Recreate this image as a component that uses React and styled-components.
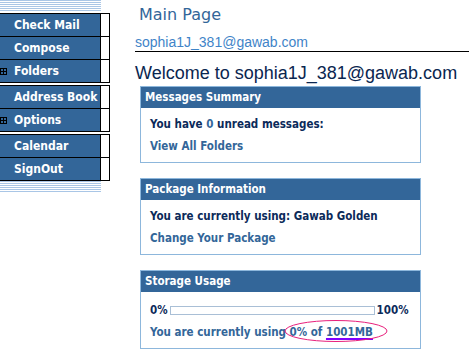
import React from "react";
import styled, { createGlobalStyle } from "styled-components";

const GlobalStyle = createGlobalStyle`
  html, body {
    margin: 0;
    padding: 0;
    background: #fff;
  }
  body {
    font-family: "DejaVu Sans Condensed", "DejaVu Sans", sans-serif;
  }
`;

const menuGroups = [
  [
    { label: "Check Mail" },
    { label: "Compose" },
    { label: "Folders", expand: true },
  ],
  [{ label: "Address Book" }, { label: "Options", expand: true }],
  [{ label: "Calendar" }, { label: "SignOut" }],
];

const PlusBox = () => (
  <svg width="7" height="7" viewBox="0 0 7 7">
    <rect x="0.5" y="0.5" width="6" height="6" fill="none" stroke="#000" />
    <path d="M1 3.5H6M3.5 1V6" stroke="#000" />
  </svg>
);

const App = () => {
  return (
    <Page>
      <GlobalStyle />
      <Sidebar>
        <Stripes />
        {menuGroups.map((group, i) => (
          <Group key={i}>
            {group.map((item) => (
              <MenuRow key={item.label}>
                <MenuCell>
                  <Expander>{item.expand && <PlusBox />}</Expander>
                  {item.label}
                </MenuCell>
              </MenuRow>
            ))}
          </Group>
        ))}
        <Stripes />
      </Sidebar>

      <Main>
        <Title>Main Page</Title>
        <Account href="#">sophia1J_381@gawab.com</Account>
        <Divider />
        <Welcome>Welcome to sophia1J_381@gawab.com</Welcome>

        <Box>
          <BoxHeader>Messages Summary</BoxHeader>
          <BoxBody>
            <Line>
              You have <Count>0</Count> unread messages:
            </Line>
            <Line>
              <Link href="#">View All Folders</Link>
            </Line>
          </BoxBody>
        </Box>

        <Box>
          <BoxHeader>Package Information</BoxHeader>
          <BoxBody>
            <Line>You are currently using: Gawab Golden</Line>
            <Line>
              <Link href="#">Change Your Package</Link>
            </Line>
          </BoxBody>
        </Box>

        <Box>
          <BoxHeader>Storage Usage</BoxHeader>
          <BoxBody $top={7}>
            <Line>
              0%
              <Bar>
                <Fill style={{ width: "0%" }} />
              </Bar>
              100%
            </Line>
            <Line $light>
              You are currently using{" "}
              <Circled>
                0% of <Used href="#">1001MB</Used>
                <Ring width="104" height="24" viewBox="0 0 104 24">
                  <ellipse
                    cx="52"
                    cy="12"
                    rx="51"
                    ry="10.5"
                    fill="none"
                    stroke="#e8207c"
                    strokeWidth="1"
                  />
                </Ring>
              </Circled>
            </Line>
          </BoxBody>
        </Box>
      </Main>
    </Page>
  );
};

export default App;

const Page = styled.div`
  display: flex;
  align-items: flex-start;
  width: 469px;
  height: 363px;
  overflow: hidden;
`;

const Sidebar = styled.div`
  width: 110px;
  flex-shrink: 0;
  display: flex;
  flex-direction: column;
  gap: 2px;
`;

const Stripes = styled.div`
  width: 101px;
  height: 12px;
  background: repeating-linear-gradient(
    to bottom,
    #a9c6e6 0px,
    #a9c6e6 1px,
    #ffffff 1px,
    #ffffff 2px
  );
  margin-bottom: -1px;
  &:last-child {
    margin-top: -2px;
    margin-bottom: 0;
  }
`;

const Group = styled.div`
  border-top: 1px solid #000;
  border-right: 1px solid #000;
  width: 109px;
`;

const MenuRow = styled.div`
  border-bottom: 1px solid #000;
  height: 22px;
`;

const MenuCell = styled.div`
  width: 101px;
  height: 100%;
  box-sizing: border-box;
  border-right: 1px solid #000;
  background: #336699;
  color: #fff;
  font-weight: bold;
  font-size: 12px;
  display: flex;
  align-items: center;
  white-space: nowrap;
  overflow: hidden;
`;

const Expander = styled.span`
  width: 14px;
  flex-shrink: 0;
  display: flex;
  align-items: center;
`;

const Main = styled.div`
  flex: 1;
  margin-left: 25px;
  padding-top: 5px;
  font-family: "Liberation Sans", Arial, sans-serif;
`;

const Title = styled.div`
  font-family: "DejaVu Sans", sans-serif;
  font-size: 16px;
  color: #336699;
  padding-left: 4px;
  line-height: 20px;
`;

const Account = styled.a`
  display: block;
  margin-top: 9px;
  font-size: 14px;
  line-height: 16px;
  color: #3f84c8;
  text-decoration: none;
`;

const Divider = styled.div`
  height: 1px;
  background: #000;
  margin-top: 1px;
`;

const Welcome = styled.div`
  margin-top: 10px;
  font-size: 18px;
  line-height: 22px;
  color: #0a2650;
  white-space: nowrap;
`;

const Box = styled.div`
  width: 279px;
  margin: 2px 0 15px 5px;
  border: 1px solid #8db7dc;
  font-family: "DejaVu Sans Condensed", "DejaVu Sans", sans-serif;
  font-weight: bold;
  font-size: 11.5px;
`;

const BoxHeader = styled.div`
  background: #336699;
  color: #fff;
  height: 21px;
  line-height: 21px;
  padding-left: 4px;
`;

const BoxBody = styled.div`
  padding: ${({ $top }) => $top ?? 5}px 9px 5px 9px;
`;

const Line = styled.div`
  display: flex;
  align-items: center;
  height: 22px;
  white-space: pre;
  color: ${({ $light }) => ($light ? "#336699" : "#0b2a5a")};
`;

const Count = styled.span`
  color: #336699;
`;

const Link = styled.a`
  color: #336699;
  text-decoration: none;
`;

const Bar = styled.div`
  width: 203px;
  height: 7px;
  border: 1px solid #a9bfd6;
  margin: 0 2px 0 2px;
  background: #fff;
`;

const Fill = styled.div`
  height: 100%;
  background: #336699;
`;

const Circled = styled.span`
  position: relative;
`;

const Used = styled.a`
  color: #336699;
  text-decoration: underline;
  text-decoration-color: #8000ff;
  text-decoration-thickness: 2px;
  text-underline-offset: 2px;
`;

const Ring = styled.svg`
  position: absolute;
  left: -6px;
  top: -6px;
  pointer-events: none;
`;
